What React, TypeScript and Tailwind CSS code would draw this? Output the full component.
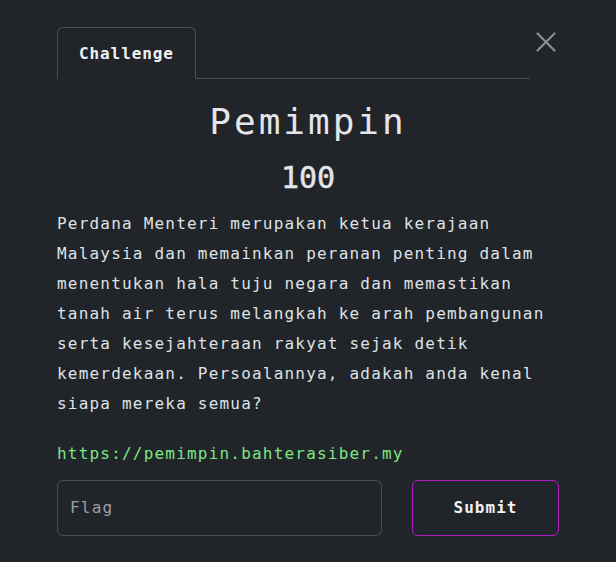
import React from "react";

export default function App() {
  const mono = { fontFamily: '"DejaVu Sans Mono", "Liberation Mono", monospace' };
  return (
    <div className="w-[616px] h-[562px] bg-[#212429] text-[#dee2e6] overflow-hidden" style={mono}>
      <div className="pl-[57px] pr-[57px] pt-[27px]">
        <div className="flex items-end">
          <div className="h-[52px] px-[21px] border border-b-0 border-[#4a4e54] rounded-t-[6px] flex items-center text-[16px] font-bold tracking-[0.9px] text-[#f0f2f4]">
            Challenge
          </div>
          <div className="flex-1 border-b border-[#4a4e54]" />
          <div className="self-start ml-[6px] mr-[3px] mt-[5px] w-[20px] h-[20px] flex items-center justify-center">
            <svg width="20" height="20" viewBox="0 0 20 20" fill="none" stroke="#8b8e92" strokeWidth="2.2" strokeLinecap="round">
              <path d="M1.5 1.5 L18.5 18.5 M18.5 1.5 L1.5 18.5" />
            </svg>
          </div>
        </div>
        <div className="mt-[21px] h-[44px] leading-[44px] text-center text-[36px] tracking-[3px] text-[#e3e5e8]">
          Pemimpin
        </div>
        <div className="mt-[14px] h-[40px] leading-[40px] text-center text-[30px] text-[#e3e5e8]" style={{ WebkitTextStroke: "0.5px #e3e5e8" }}>
          100
        </div>
        <p className="mt-[11px] text-[16px] leading-[30px] tracking-[1.2px]">
          Perdana Menteri merupakan ketua kerajaan Malaysia dan memainkan peranan penting dalam menentukan hala tuju negara dan memastikan tanah air terus melangkah ke arah pembangunan serta kesejahteraan rakyat sejak detik kemerdekaan. Persoalannya, adakah anda kenal siapa mereka semua?
        </p>
        <div className="mt-[20px] text-[16px] leading-[30px] tracking-[1.2px] text-[#7ce684]">
          https://pemimpin.bahterasiber.my
        </div>
        <div className="mt-[11px] flex items-center">
          <div className="w-[325px] h-[56px] border border-[#4a4e54] rounded-[6px] flex items-center px-[12px] text-[16px] tracking-[1.2px] text-[#9a9ea3]">
            Flag
          </div>
          <div className="ml-[30px] w-[147px] h-[56px] border border-[#b41dc0] rounded-[6px] flex items-center justify-center text-[16px] font-bold tracking-[1px] text-[#f0f2f4]">
            Submit
          </div>
        </div>
      </div>
    </div>
  );
}
